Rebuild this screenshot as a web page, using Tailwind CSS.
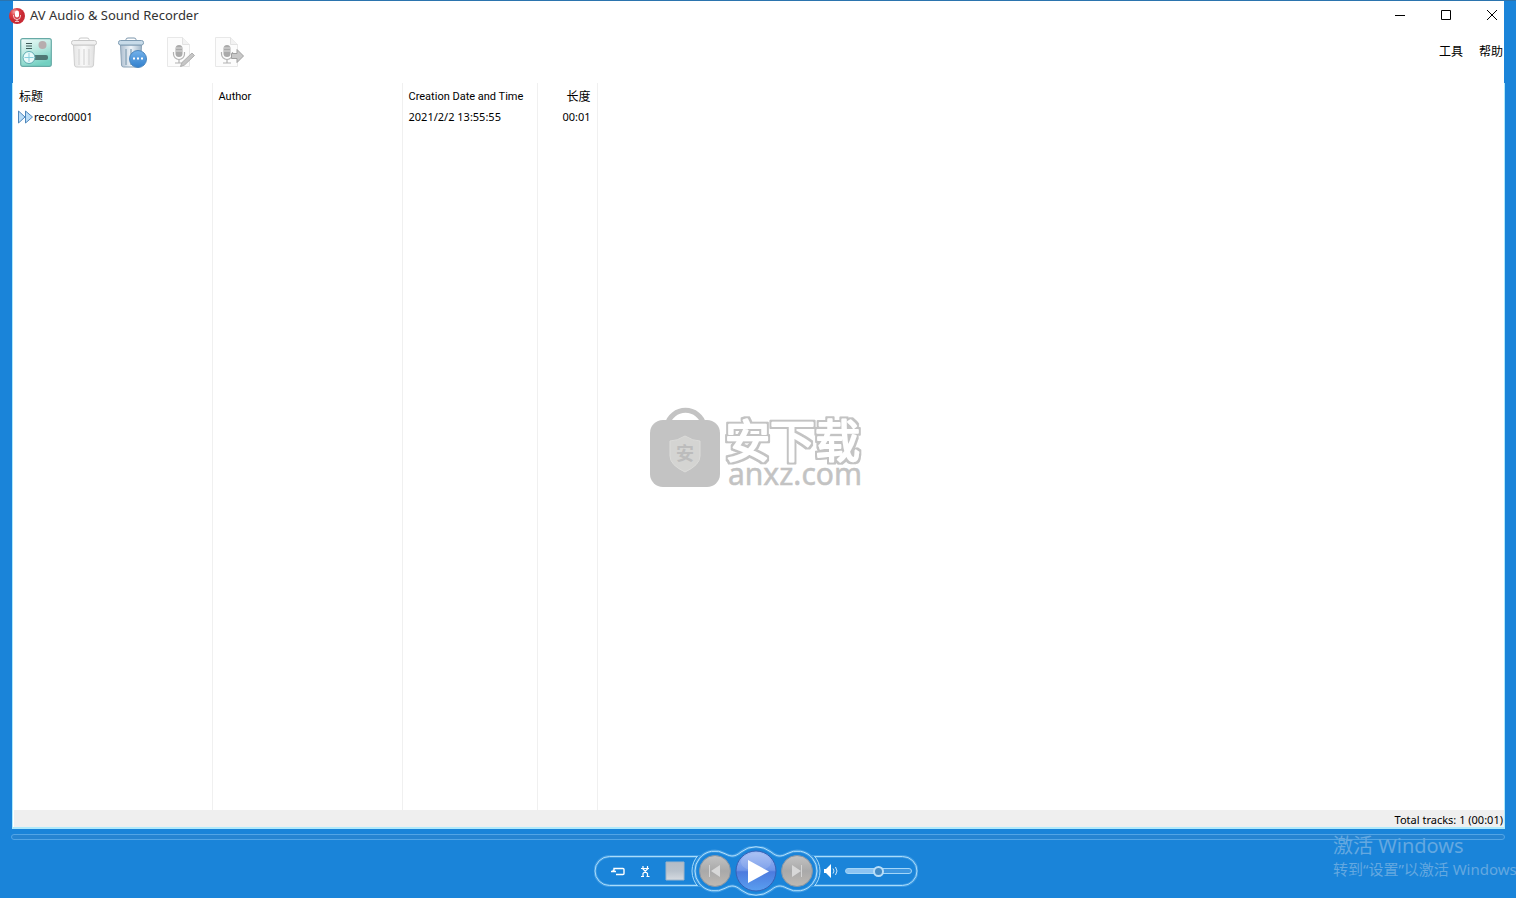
<!DOCTYPE html>
<html lang="zh">
<head>
<meta charset="utf-8">
<title>AV Audio &amp; Sound Recorder</title>
<script src="https://cdn.jsdelivr.net/npm/@tailwindcss/browser@4"></script>
</head>
<body class="relative flex h-screen flex-col overflow-hidden bg-[#1a84d9] font-['Noto_Sans','Noto_Sans_CJK_SC',sans-serif] text-[11px] text-black">
<div class="h-px shrink-0 bg-[#2b74ae]"></div>
<header class="ml-[13px] mr-3 shrink-0 bg-white">
  <div class="flex h-[29px] items-center">
    <svg class="-ml-1 size-4" viewBox="0 0 16 16">
      <defs><radialGradient id="red" cx=".35" cy=".25"><stop offset="0" stop-color="#f4a4a4"/><stop offset=".5" stop-color="#dc3f46"/><stop offset="1" stop-color="#c82a34"/></radialGradient></defs>
      <circle cx="8" cy="8" r="8" fill="url(#red)"/><rect x="6" y="2.500" width="4" height="7" rx="2" fill="#fff"/><path d="M4.500 7v1a3.500 3.500 0 0 0 7 0V7M8 11.500V13M6 13.500h4" fill="none" stroke="#fff" stroke-opacity=".7"/>
    </svg>
    <h1 class="ml-[5px] text-[13px] text-[#333]">AV Audio &amp; Sound Recorder</h1>
    <div class="ml-auto flex h-7 items-center gap-4 self-start">
      <button aria-label="Minimize" class="flex w-[30px] justify-center"><svg class="size-3" viewBox="0 0 12 12"><path d="M1 6.500h10" stroke="#000"/></svg></button>
      <button aria-label="Maximize" class="flex w-[30px] justify-center"><svg class="size-3" viewBox="0 0 12 12"><path d="M1.500 1.500h9v9h-9z" fill="none" stroke="#000"/></svg></button>
      <button aria-label="Close" class="flex w-[27px] justify-center pl-[2px]"><svg class="size-3" viewBox="0 0 12 12"><path d="M1 1l10 10M11 1L1 11" stroke="#000"/></svg></button>
    </div>
  </div>
  <div class="flex h-[53px] items-start justify-between">
    <div class="flex gap-4 pl-[7px] pt-[7px]">
      <button aria-label="Record"><svg class="size-8" viewBox="0 0 32 32">
        <defs><linearGradient id="teal" x1=".1" x2=".5" y2="1"><stop stop-color="#edfaf8"/><stop offset=".5" stop-color="#b8e8e0"/><stop offset="1" stop-color="#72d0c1"/></linearGradient></defs>
        <rect x=".7" y="1.700" width="30.600" height="27.600" rx="2" fill="url(#teal)" stroke="#67aaa6" stroke-width="1.200"/>
        <path d="M6 6.500h6M6 9h6M6 11.500h6" stroke="#3e5a58"/><circle cx="22.500" cy="8" r="4" fill="#b7adae"/>
        <rect x="11" y="18" width="17" height="5" rx="2" fill="#4f7774"/><circle cx="9" cy="20.500" r="6" fill="#e8fafa" stroke="#5caab0"/><path d="M9 16v9M4.500 20.500h9" stroke="#88cedd"/>
      </svg></button>
      <button aria-label="Delete"><svg class="size-8" viewBox="0 0 32 32">
        <defs><linearGradient id="can"><stop stop-color="#e6e6e6"/><stop offset=".5" stop-color="#fafafa"/><stop offset="1" stop-color="#e0e0e0"/></linearGradient></defs>
        <path d="M5.500 8h21l-1 20q-.2 2-2 2h-15q-1.800 0-2-2z" fill="url(#can)" stroke="#cfcfcf"/><path d="M11 12v16M16 12v16M21 12v16" stroke="#dcdcdc" stroke-width="1.500"/>
        <path d="M11 4V2.500Q11 1 13 1h6q2 0 2 1.500V4" fill="none" stroke="#c8c8c8"/><rect x="3.500" y="3.500" width="25" height="4.500" rx="2" fill="#f0f0f0" stroke="#c8c8c8"/>
      </svg></button>
      <button aria-label="Delete all"><svg class="size-8" viewBox="0 0 32 32">
        <defs><linearGradient id="bcan"><stop stop-color="#aebfd0"/><stop offset=".5" stop-color="#eef4f9"/><stop offset="1" stop-color="#9fb5c8"/></linearGradient><linearGradient id="ball" x2="0" y2="1"><stop stop-color="#72b1ea"/><stop offset="1" stop-color="#3280cd"/></linearGradient></defs>
        <path d="M4.500 8h21l-1 20q-.2 2-2 2h-15q-1.800 0-2-2z" fill="url(#bcan)" stroke="#8ba2b6"/><path d="M10 12v16M15 12v16" stroke="#91aabd" stroke-width="1.500"/>
        <path d="M10 4V2.500Q10 1 12 1h6q2 0 2 1.500V4" fill="none" stroke="#7b95ab"/><rect x="2.500" y="3.500" width="25" height="4.500" rx="2" fill="#c8dbe9" stroke="#7f9cb3"/>
        <circle cx="22" cy="22" r="8.500" fill="url(#ball)" stroke="#4a86bf"/><path d="M17 21.500h2M21 21.500h2M25 21.500h2" stroke="#fff" stroke-width="2"/>
      </svg></button>
      <button aria-label="Edit recording"><svg class="size-8" viewBox="0 0 32 32">
        <path d="M3.500.5h15l7 7v22h-22z" fill="#fcfcfc" stroke="#e8e8e8"/><path d="M18.500.5v7h7" fill="#f2f2f2" stroke="#e2e2e2"/>
        <rect x="11.500" y="8" width="7" height="12" rx="3.500" fill="#aaa"/><path d="M12 11h6M12 14h6" stroke="#ddd"/><path d="M9.500 15v2a5.500 5.500 0 0 0 11 0v-2M15 22.500V26M11 26h8" fill="none" stroke="#b2b2b2" stroke-width="1.200"/>
        <path d="M16.500 29.500l1.500-4 10-9.500 2.500 2.500-10 9.500z" fill="#c6c6c6" stroke="#b0b0b0"/>
      </svg></button>
      <button aria-label="Export recording"><svg class="size-8" viewBox="0 0 32 32">
        <path d="M3.500.5h15l7 7v22h-22z" fill="#fcfcfc" stroke="#e8e8e8"/><path d="M18.500.5v7h7" fill="#f2f2f2" stroke="#e2e2e2"/>
        <rect x="11.500" y="8" width="7" height="12" rx="3.500" fill="#aaa"/><path d="M12 11h6M12 14h6" stroke="#ddd"/><path d="M9.500 15v2a5.500 5.500 0 0 0 11 0v-2M15 22.500V26M11 26h8" fill="none" stroke="#b2b2b2" stroke-width="1.200"/>
        <path d="M19.500 16.500H25v-4l6.500 6.500-6.500 6.500v-4h-5.500z" fill="#c8c8c8" stroke="#a0a0a0"/>
      </svg></button>
    </div>
    <nav class="flex gap-4 pr-px pt-[13px] text-[12px] leading-[18px]"><button>工具</button><button>帮助</button></nav>
  </div>
</header>
<main class="relative ml-3 mr-[11px] flex min-h-0 flex-1 flex-col border-x border-b-2 border-[#aee9fc] bg-white">
  <table class="w-full flex-1 table-fixed border-collapse text-left leading-4">
    <colgroup><col class="w-[199px]"><col class="w-[190px]"><col class="w-[135px]"><col class="w-[60px]"><col></colgroup>
    <thead><tr class="h-6 [&>*]:border-r [&>*]:border-[#f0f0f0] [&>*]:px-[6px] [&>*]:pb-0 [&>*]:pt-1 [&>*]:font-['Roboto','Noto_Sans_CJK_SC',sans-serif] [&>*]:font-normal [&>*:last-child]:border-0">
      <th class="text-[12px]">标题</th><th>Author</th><th>Creation Date and Time</th><th class="text-right text-[12px]">长度</th><td></td></tr></thead>
    <tbody>
      <tr class="h-5 [&>*]:border-r [&>*]:border-[#f0f0f0] [&>*]:px-[6px] [&>*]:py-0 [&>*:last-child]:border-0">
        <td><span class="-ml-px flex items-center gap-px"><svg class="h-[14px] w-[15px] shrink-0" viewBox="0 0 15 14"><path d="M.5 1l6.500 6-6.500 6zM7.500 1l7 6-7 6z" fill="#b9dcf7" stroke="#4e86bb"/></svg>record0001</span></td>
        <td></td><td>2021/2/2 13:55:55</td><td class="text-right">00:01</td><td></td></tr>
      <tr class="h-full [&>*]:border-r [&>*]:border-[#f0f0f0] [&>*:last-child]:border-0"><td></td><td></td><td></td><td></td><td></td></tr>
    </tbody>
  </table>
  <footer class="ml-px flex h-[17px] shrink-0 items-center justify-end bg-[#efefef] pr-px pt-[2px] leading-4">Total tracks: 1 (00:01)</footer>
  <svg class="pointer-events-none absolute left-[636px] top-[320px] h-[90px] w-[220px]" viewBox="0 0 220 90">
    <defs><filter id="outline" x="-5%" y="-10%" width="110%" height="120%"><feMorphology in="SourceAlpha" operator="dilate" radius="1.500" result="wide"/><feFlood flood-color="#c3c3c3"/><feComposite in2="wide" operator="in" result="edge"/><feMerge><feMergeNode in="edge"/><feMergeNode in="SourceGraphic"/></feMerge></filter></defs>
    <path d="M18 22a19 19 0 0 1 37 0" fill="none" stroke="#c3c3c3" stroke-width="5"/>
    <rect x="1" y="17" width="70" height="67" rx="13" fill="#c3c3c3"/>
    <path d="M36 33q8 5 15 5v15q0 9-15 16-15-7-15-16V38q7 0 15-5z" fill="#d4d4d2" stroke="#dcdcda"/>
    <text x="27" y="57" font-size="18" font-weight="700" fill="#bcbcbc" font-family="Noto Sans CJK SC">安</text>
    <text x="76" y="55" font-size="45" font-weight="400" fill="#fff" stroke="#fff" stroke-width="2" stroke-linejoin="round" filter="url(#outline)" font-family="Noto Sans CJK SC">安下载</text>
    <text x="79" y="82" font-size="30" fill="#c3c3c3" stroke="#c3c3c3" stroke-width=".5" font-family="Noto Sans">anxz.com</text>
  </svg>
</main>
<input type="range" aria-label="Seek" value="0" class="ml-[11px] mr-[11px] mt-[5px] block h-[6px] shrink-0 appearance-none rounded-full border border-[#52a5e6] bg-[#2684d1] [&::-webkit-slider-thumb]:appearance-none">
<footer class="flex h-[58px] shrink-0 justify-center pt-[6px]">
  <div class="relative mr-1 h-[50px] w-[324px]">
    <svg class="absolute inset-0 size-full" viewBox="0 0 324 50">
      <defs>
        <linearGradient id="gray" x2="0" y2="1"><stop stop-color="#c3c3c3"/><stop offset=".5" stop-color="#a9a9a9"/><stop offset="1" stop-color="#bfb9b3"/></linearGradient>
        <linearGradient id="play" x2="0" y2="1"><stop stop-color="#a4bdf4"/><stop offset=".48" stop-color="#6d94e8"/><stop offset=".52" stop-color="#4d7bde"/><stop offset="1" stop-color="#5a9ff0"/></linearGradient>
        <linearGradient id="square" x2="0" y2="1"><stop stop-color="#b4bcc6"/><stop offset=".5" stop-color="#b9c2cc"/><stop offset="1" stop-color="#d5dae0"/></linearGradient>
        <clipPath id="pill"><rect x="1" y="10" width="322" height="30" rx="15"/></clipPath>
      </defs>
      <rect x="1" y="10.500" width="322" height="29" rx="14.500" fill="#1a84d9" stroke="#3f9be3" stroke-width="3"/>
      <rect x="1" y="10.500" width="322" height="29" rx="14.500" fill="none" stroke="#a9dcfa"/>
      <g clip-path="url(#pill)" fill="#1a84d9" stroke="#a9dcfa"><circle cx="121" cy="25" r="23"/><circle cx="203" cy="25" r="23"/></g>
      <path d="M131 7.700C137 11 141 11 147 6A24 24 0 0 1 177 6C183 11 187 11 193 7.700A20 20 0 1 1 193 42.300C187 39 183 39 177 44A24 24 0 0 1 147 44C141 39 137 39 131 42.300A20 20 0 1 1 131 7.700z" fill="#1a84d9" stroke="#3f9be3" stroke-width="3"/>
      <path d="M131 7.700C137 11 141 11 147 6A24 24 0 0 1 177 6C183 11 187 11 193 7.700A20 20 0 1 1 193 42.300C187 39 183 39 177 44A24 24 0 0 1 147 44C141 39 137 39 131 42.300A20 20 0 1 1 131 7.700z" fill="none" stroke="#b4e1fc"/>
    </svg>
    <div class="relative flex h-full items-center">
      <button aria-label="Repeat" class="ml-[17px]"><svg class="size-[14px]" viewBox="0 0 14 14"><path d="M3 6.500V4.500h9q1 0 1 1v4q0 1-1 1H5M0 7.500h5M1.500 6.500h2" fill="none" stroke="#fff" stroke-width="1.400"/></svg></button>
      <button aria-label="Shuffle" class="ml-[14px]"><svg class="h-[14px] w-3" viewBox="0 0 12 14"><path d="M4 2v3l4.500 4.500V13M8.500 2v3L4 9.500V13M2 4.500h8M2 12.500h3M7.500 12.500h3" fill="none" stroke="#fff" stroke-width="1.200"/></svg></button>
      <button aria-label="Stop" class="ml-[14px]"><svg class="h-5 w-5" viewBox="0 0 20 20"><path d="M1 1h18v18H1z" fill="url(#square)" stroke="#9fb4c8"/></svg></button>
      <button aria-label="Previous" class="ml-[14px]"><svg class="size-8" viewBox="0 0 32 32"><circle cx="16" cy="16" r="15.500" fill="url(#gray)" stroke="#8795a4"/><path d="M10.500 10v12" stroke="#d4d4d4"/><path d="M21 10v12l-9-6z" fill="#d8d8d8"/></svg></button>
      <button aria-label="Play" class="ml-1"><svg class="size-[42px]" viewBox="0 0 42 42"><circle cx="21" cy="21" r="20" fill="url(#play)" stroke="#3760b4"/><ellipse cx="21" cy="12" rx="15" ry="9" fill="#fff" fill-opacity=".12"/><path d="M13 10v23L34 21.500z" fill="#fff"/></svg></button>
      <button aria-label="Next" class="ml-1"><svg class="size-8" viewBox="0 0 32 32"><circle cx="16" cy="16" r="15.500" fill="url(#gray)" stroke="#8795a4"/><path d="M20.500 10v12" stroke="#d4d4d4"/><path d="M11 10v12l9-6z" fill="#d8d8d8"/></svg></button>
      <button aria-label="Mute" class="ml-[10px]"><svg class="size-4" viewBox="0 0 16 16"><path d="M1 6h2l5-5v14l-5-5H1z" fill="#fff"/><path d="M10 5.500q2 2.500 0 5M12.500 4q3 4 0 8" fill="none" stroke="#cfe8fb"/></svg></button>
      <input type="range" aria-label="Volume" value="50" class="ml-[6px] h-[6px] w-[67px] appearance-none rounded-full border border-[#a3d6f8] bg-linear-to-r from-[#8dc4f2] from-50% to-[#3f97e0] to-50% [&::-webkit-slider-thumb]:size-[11px] [&::-webkit-slider-thumb]:appearance-none [&::-webkit-slider-thumb]:rounded-full [&::-webkit-slider-thumb]:border-2 [&::-webkit-slider-thumb]:border-[#b9def8] [&::-webkit-slider-thumb]:bg-[#438bc5]">
    </div>
  </div>
</footer>
<div class="pointer-events-none absolute left-[1333px] top-[832px] whitespace-nowrap text-[#64a8e0]">
  <p class="text-[20px] leading-7">激活 Windows</p>
  <p class="text-[15px] leading-[18px]">转到“设置”以激活 Windows</p>
</div>
</body>
</html>
